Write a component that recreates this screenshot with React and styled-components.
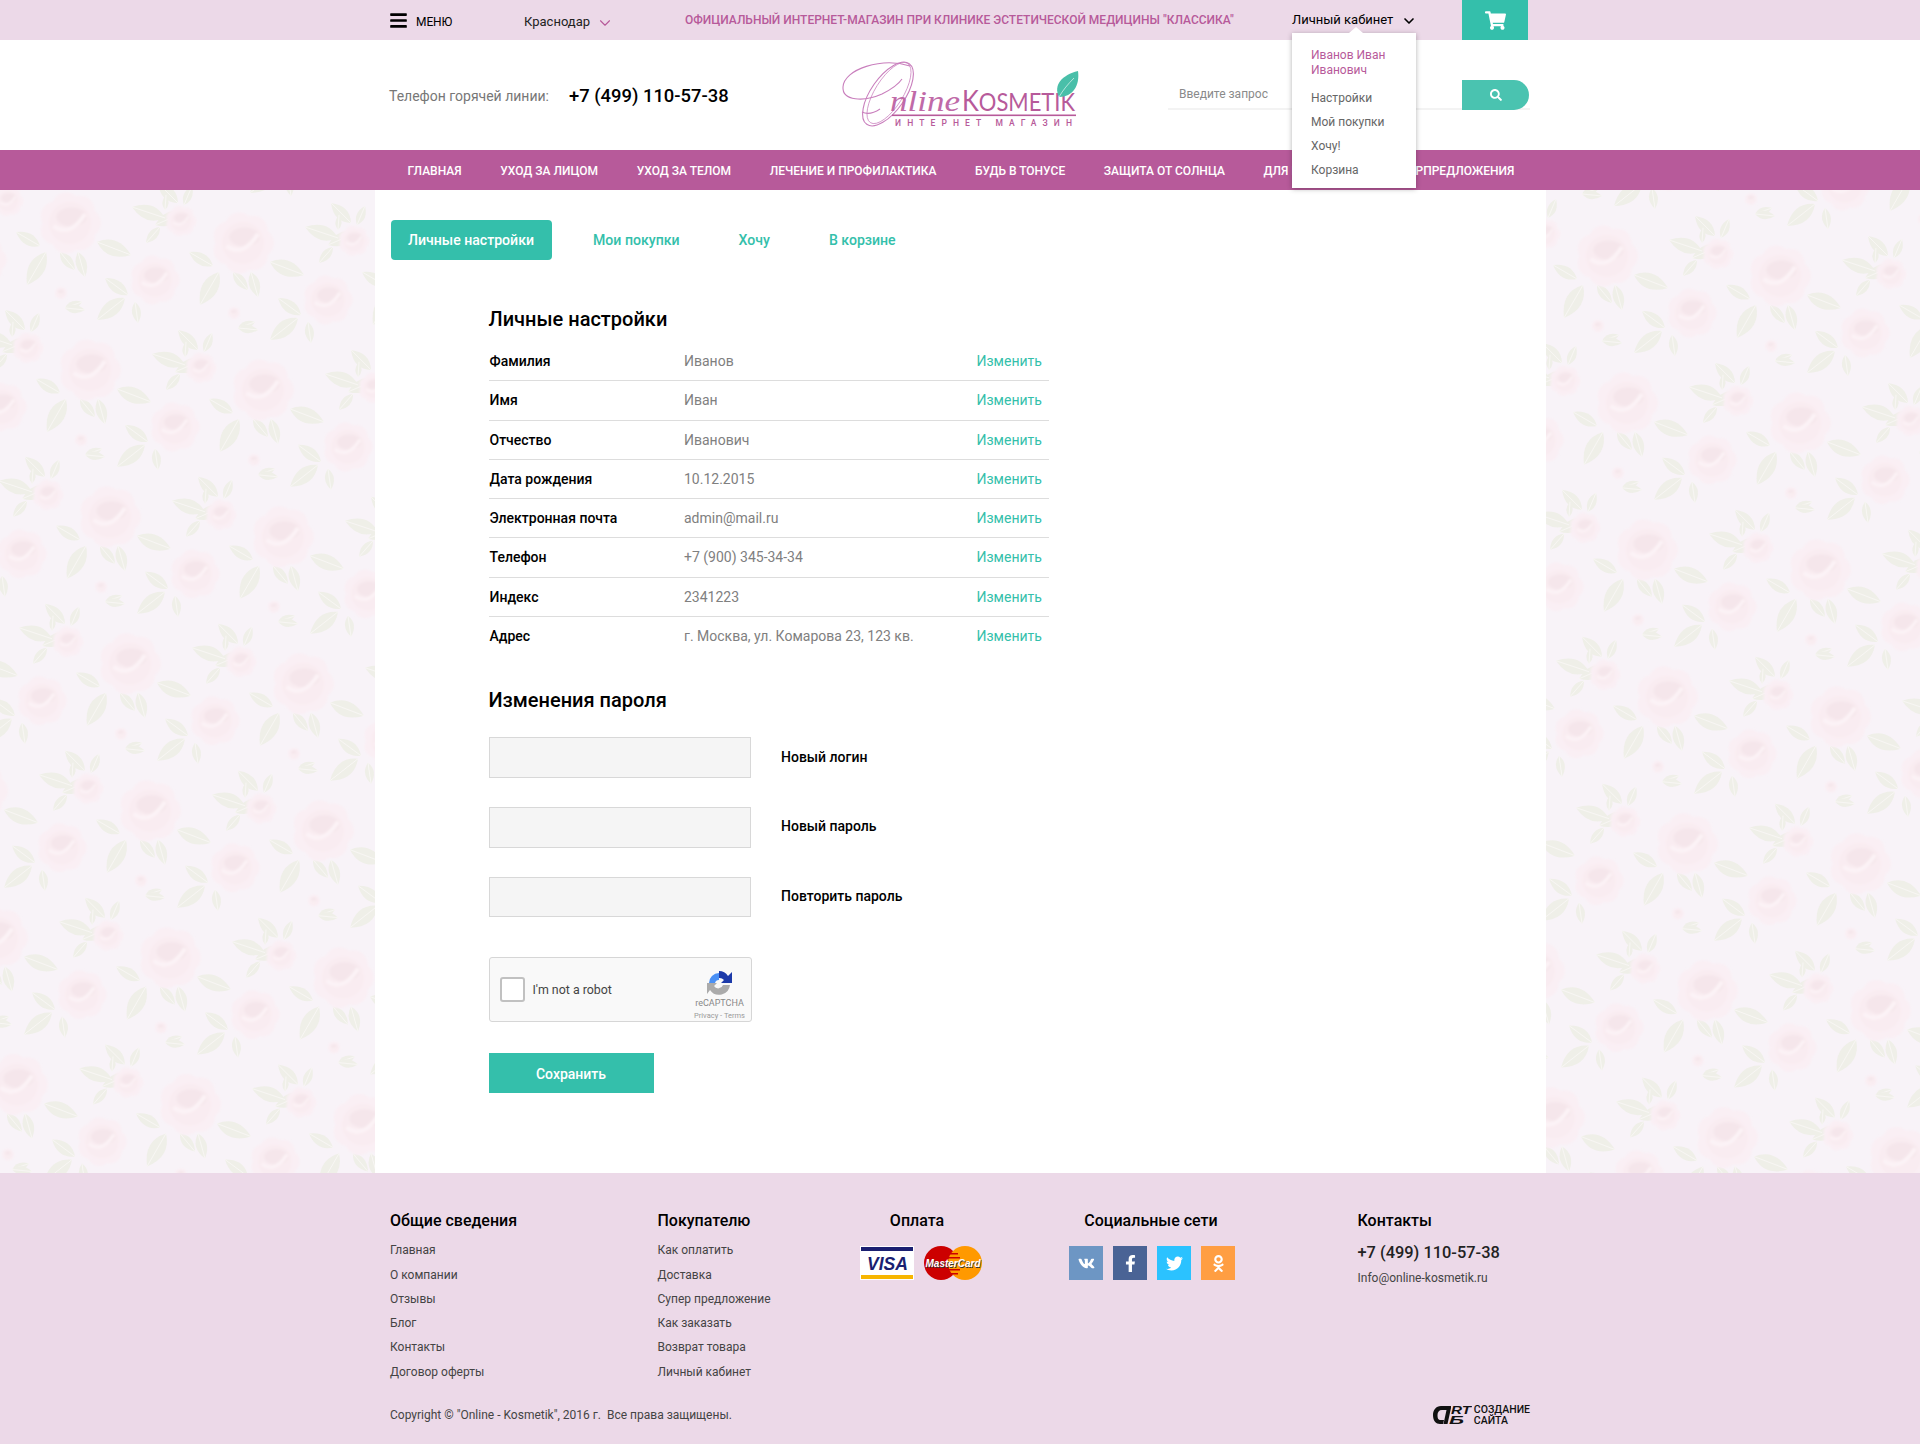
import React from 'react'
import styled, { createGlobalStyle } from 'styled-components'
import { FaBars, FaShoppingCart, FaSearch, FaVk, FaFacebookF, FaTwitter, FaOdnoklassniki } from 'react-icons/fa'
import { ChevronDown } from 'lucide-react'

const teal = '#34bfab'
const pink = '#b75a9a'

const leaf = (x1, y1, x2, y2) => {
  const dx = x2 - x1, dy = y2 - y1
  const nx = -dy * 0.42, ny = dx * 0.42
  const mx = x1 + dx * 0.45, my = y1 + dy * 0.45
  return `<path d="M${x1} ${y1}Q${mx + nx} ${my + ny} ${x2} ${y2}Q${mx - nx} ${my - ny} ${x1} ${y1}Z" fill="#efefe8"/><path d="M${x1} ${y1}L${x2} ${y2}" stroke="#f8f6f4" stroke-width="1"/>`
}

const rose = (x, y, r) => {
  let petals = ''
  for (let k = 0; k < 7; k++) {
    const a = (k / 7) * Math.PI * 2
    petals += `<circle cx="${x + Math.cos(a) * r * 0.55}" cy="${y + Math.sin(a) * r * 0.55}" r="${r * 0.48}" fill="#faeff4"/>`
  }
  return `<g filter="url(#b)">${petals}
    <circle cx="${x}" cy="${y}" r="${r * 0.7}" fill="#f9ecf1"/>
    <ellipse cx="${x + r * 0.05}" cy="${y - r * 0.2}" rx="${r * 0.5}" ry="${r * 0.32}" fill="#f5e6eb"/>
    <path d="M${x - r * 0.55} ${y + r * 0.1}Q${x} ${y + r * 0.5} ${x + r * 0.5} ${y - r * 0.3}" stroke="#fcf3f6" stroke-width="${r * 0.14}" fill="none"/>
  </g>`
}

const motif = [
  leaf(40, 66, 16, 52), leaf(97, 62, 131, 75), leaf(46, 72, 27, 105), leaf(78, 72, 85, 97), leaf(60, 72, 75, 90),
  rose(70, 43, 30),
  leaf(165, 38, 132, 27), leaf(165, 30, 166, 15), leaf(160, 47, 146, 63),
  rose(181, 41, 15),
  leaf(128, 115, 105, 98), leaf(125, 118, 97, 140), leaf(135, 122, 138, 143),
  rose(155, 100, 24),
  leaf(65, 128, 82, 122), leaf(65, 128, 85, 130),
  rose(61, 113, 6),
  leaf(25, 150, 5, 130), leaf(31, 152, 39, 133), leaf(30, 160, 2, 172),
].join('')

const buildFloral = () => {
  let uses = ''
  for (let j = -2; j < 9; j++) {
    for (let i = -2; i < 13; i++) {
      uses += `<use href="#m" x="${i * 173 + j * 20}" y="${i * 20 + j * 147 - 10}"/>`
    }
  }
  const svg = `<svg xmlns="http://www.w3.org/2000/svg" width="1920" height="990"><defs><filter id="b" x="-20%" y="-20%" width="140%" height="140%"><feGaussianBlur stdDeviation="1.2"/></filter><g id="m">${motif}</g></defs>${uses}</svg>`
  return `url("data:image/svg+xml,${encodeURIComponent(svg)}")`
}

const GlobalStyle = createGlobalStyle`
  html, body { margin: 0; padding: 0; }
  body { font-family: Roboto, "Liberation Sans", sans-serif; background: #fff; color: #000; }
  * { box-sizing: border-box; }
`

const Container = styled.div`
  width: 1140px;
  margin: 0 auto;
  display: flex;
`

const TopBar = styled.div`
  height: 40px;
  background: #ecd9e8;
  position: relative;
  z-index: 5;
`

const MenuBtn = styled.div`
  width: 134px;
  display: flex;
  align-items: center;
  font-size: 12px;
  svg { font-size: 19px; margin: 0 8px 0 -1px; }
  span { padding-top: 3px; letter-spacing: -0.1px; }
`

const City = styled.div`
  width: 161px;
  display: flex;
  align-items: center;
  font-size: 13px;
  color: #222;
  padding-top: 2px;
  svg { margin-left: 6px; color: ${pink}; margin-top: 2px; }
`

const Slogan = styled.div`
  width: 607px;
  font-size: 12px;
  font-weight: 500;
  color: ${pink};
  line-height: 41px;
  white-space: nowrap;
`

const Account = styled.div`
  width: 170px;
  position: relative;
  display: flex;
  align-items: center;
  height: 40px;
  font-size: 13px;
  padding-bottom: 1px;
  svg { margin-left: 8px; margin-top: 2px; }
`

const Dropdown = styled.div`
  position: absolute;
  left: 0;
  top: 33px;
  width: 124px;
  height: 155px;
  background: #fff;
  box-shadow: 0 1px 5px rgba(0, 0, 0, 0.3);
  padding: 15px 0 0 19px;
  font-size: 12px;
  color: #666;
  z-index: 10;
  &::before {
    content: '';
    position: absolute;
    left: 57px;
    top: -6px;
    border-left: 7px solid transparent;
    border-right: 7px solid transparent;
    border-bottom: 6px solid #fff;
  }
`

const DropName = styled.div`
  color: ${pink};
  line-height: 15px;
  margin-bottom: 8px;
  padding-right: 20px;
`

const DropItem = styled.div`
  line-height: 24px;
`

const Cart = styled.div`
  width: 66px;
  height: 40px;
  background: ${teal};
  display: flex;
  align-items: center;
  justify-content: center;
  color: #fff;
  font-size: 21px;
`

const Header = styled.div`
  height: 110px;
  background: #fff;
  ${Container} { height: 100%; align-items: center; }
`

const PhoneBlock = styled.div`
  width: 452px;
  display: flex;
  align-items: center;
  padding-top: 1px;
  margin-left: -1px;
  margin-right: 1px;
`

const PhoneLabel = styled.span`
  width: 180px;
  font-size: 14px;
  color: #777;
`

const PhoneNum = styled.span`
  font-size: 18.4px;
  font-weight: 500;
`

const LogoSlot = styled.div`
  width: 326px;
  height: 76px;
  svg { display: block; margin-left: -4px; }
`

const Search = styled.div`
  width: 362px;
  height: 30px;
  display: flex;
  border-bottom: 2px solid #f3f3f3;
`

const SearchText = styled.div`
  width: 294px;
  padding-left: 11px;
  font-size: 12px;
  line-height: 29px;
  color: #8a8a8a;
`

const SearchBtn = styled.div`
  width: 67px;
  height: 30px;
  background: #4ac3b0;
  border-radius: 0 15px 15px 0;
  color: #fff;
  font-size: 12px;
  display: flex;
  align-items: center;
  justify-content: center;
`

const Nav = styled.div`
  height: 40px;
  background: ${pink};
`

const NavList = styled.div`
  display: flex;
  gap: 38.6px;
  padding-left: 17.5px;
  font-size: 12px;
  font-weight: 500;
  line-height: 42px;
  color: #fff;
  white-space: nowrap;
`

const Main = styled.div`
  background-color: #f8f3f8;
  background-image: ${buildFloral()};
  background-repeat: no-repeat;
`

const Column = styled.div`
  width: 1171px;
  margin: 0 auto;
  background: #fff;
  padding: 30px 0 80px 16px;
`

const Tabs = styled.div`
  display: flex;
  gap: 24px;
`

const Tab = styled.div`
  height: 40px;
  padding: 0 17.5px;
  border-radius: 4px;
  font-size: 14.1px;
  font-weight: 500;
  line-height: 40px;
  background: ${p => (p.$active ? teal : 'transparent')};
  color: ${p => (p.$active ? '#fff' : teal)};
`

const Section = styled.div`
  margin-left: 98px;
`

const Title = styled.h2`
  margin: ${p => p.$top}px 0 ${p => p.$bottom}px 0;
  font-size: 20px;
  font-weight: 500;
  line-height: 24px;
  color: #000;
`

const Table = styled.div`
  width: 560px;
`

const Row = styled.div`
  height: 39.25px;
  display: flex;
  align-items: center;
  font-size: 14px;
  border-bottom: 1px solid #ddd;
  &:last-child { border-bottom: none; }
`

const RowLabel = styled.span`
  width: 195.5px;
  font-weight: 500;
  padding-left: 1px;
`

const RowValue = styled.span`
  width: 292.5px;
  color: #808080;
`

const RowLink = styled.span`
  color: ${teal};
`

const FormRow = styled.div`
  display: flex;
  align-items: center;
  margin-bottom: ${p => (p.$last ? 0 : 29.3)}px;
`

const Input = styled.div`
  width: 262px;
  height: 40.5px;
  background: #f5f5f5;
  border: 1px solid #d8d8d8;
  margin-right: 30.5px;
`

const FormLabel = styled.span`
  font-size: 14px;
  font-weight: 500;
  padding-bottom: 2px;
`

const Captcha = styled.div`
  width: 263px;
  height: 65px;
  margin-top: 40px;
  background: #f9f9f9;
  border: 1px solid #d6d6d6;
  border-radius: 3px;
  display: flex;
  align-items: center;
  padding-left: 10px;
`

const CaptchaBox = styled.div`
  width: 25px;
  height: 25px;
  background: #fff;
  border: 2px solid #c1c1c1;
  border-radius: 3px;
  margin-right: 8px;
`

const CaptchaText = styled.span`
  font-size: 12.4px;
  color: #444;
`

const CaptchaBrand = styled.div`
  margin-left: auto;
  width: 60px;
  margin-right: 1px;
  padding-top: 12px;
  display: flex;
  flex-direction: column;
  align-items: center;
  svg { display: block; margin-bottom: 1px; }
`

const BrandName = styled.span`
  font-size: 9px;
  line-height: 13px;
  color: #888;
`

const BrandLinks = styled.span`
  font-size: 7.5px;
  line-height: 12px;
  color: #999;
  white-space: nowrap;
`

const SaveBtn = styled.div`
  width: 165px;
  height: 40px;
  margin-top: 31px;
  background: ${teal};
  color: #fff;
  font-size: 14px;
  font-weight: 500;
  line-height: 42px;
  text-align: center;
`

const Footer = styled.div`
  height: 271px;
  background: #ecd9e8;
  padding-top: 39px;
  ${Container} { flex-wrap: wrap; }
`

const FootCol = styled.div`
  width: ${p => p.$w}px;
  margin-left: ${p => p.$ml || 0}px;
  height: 193px;
`

const FootHead = styled.div`
  font-size: 16px;
  font-weight: 500;
  line-height: 18px;
  margin-bottom: ${p => p.$mb || 8}px;
  margin-left: ${p => p.$shift || 0}px;
  text-align: ${p => (p.$center ? 'center' : 'left')};
`

const FootLink = styled.div`
  font-size: 12px;
  line-height: 24.2px;
  color: #444;
`

const Cards = styled.div`
  display: flex;
  align-items: center;
  gap: 10px;
  margin-left: 3px;
`

const Socials = styled.div`
  display: flex;
  gap: 10px;
`

const Social = styled.div`
  width: 34px;
  height: 34px;
  background: ${p => p.$bg};
  color: #fff;
  font-size: ${p => p.$size || 17}px;
  display: flex;
  align-items: center;
  justify-content: center;
`

const FootPhone = styled.div`
  font-size: 16.4px;
  font-weight: 500;
  line-height: 22px;
  color: #222;
  margin-top: -2px;
`

const FootMail = styled.div`
  font-size: 12px;
  line-height: 18px;
  color: #444;
  margin-top: 5px;
`

const Bottom = styled.div`
  width: 100%;
  height: 20px;
  display: flex;
  align-items: center;
  justify-content: space-between;
  font-size: 12px;
  color: #444;
`

const ArtLogo = styled.div`
  display: flex;
  align-items: center;
  gap: 2px;
  svg { display: block; }
`

const ArtText = styled.div`
  font-size: 10.5px;
  font-weight: 500;
  line-height: 11px;
  color: #111;
`

const Logo = () => (
  <svg width="244" height="76" viewBox="0 0 244 76">
    <g fill="none" stroke="#c97fbd" strokeWidth="1.1">
      <ellipse cx="50" cy="37" rx="37" ry="17" transform="rotate(-55 50 37)" />
      <ellipse cx="51" cy="36" rx="35" ry="14" transform="rotate(-58 51 36)" strokeWidth="0.7" />
      <path d="M72 9 C44 0 6 12 5 30 C4 44 26 45 44 37 C54 32 60 28 64 22" />
      <path d="M24 55 C30 58 36 56 42 52" />
    </g>
    <text x="52" y="54" fontFamily='"Liberation Serif", serif' fontStyle="italic" fontSize="30" fill="#c06aa8" textLength="70" lengthAdjust="spacingAndGlyphs">nline</text>
    <text x="124" y="54" fontFamily='Lato, "Open Sans", sans-serif' fill="#b75a9a" textLength="113" lengthAdjust="spacingAndGlyphs">
      <tspan fontSize="29">K</tspan><tspan fontSize="25">OSMETIK</tspan>
    </text>
    <rect x="54" y="57.5" width="184" height="1.6" fill="#b75a9a" />
    <text x="57" y="69" fontFamily='Roboto, sans-serif' fontSize="8.5" fontWeight="500" fill="#b75a9a" textLength="177" lengthAdjust="spacing">ИНТЕРНЕТ МАГАЗИН</text>
    <path d="M221 40 C215 28 224 18 240 14 C242 28 235 40 221 40 Z" fill="#49bfa9" />
    <path d="M221 40 C225 33 230 27 236 21" stroke="#fff" strokeWidth="0.6" fill="none" />
  </svg>
)

const RecaptchaIcon = () => (
  <svg width="27" height="26" viewBox="0 0 27 26">
    <path d="M3 13 A10 10 0 0 1 13 3 L13 10 A4 4 0 0 0 9 13 Z" fill="#4a90f5" />
    <path d="M13 1 A11 11 0 0 1 22 6 L26 2 L26 13 L15 13 L18 10 A6 6 0 0 0 13 8 Z" fill="#1c3aa9" />
    <path d="M1 13 L1 24 L4 20 A11 11 0 0 0 24 15 L17 15 A5 5 0 0 1 8 16 L11 13 Z" fill="#ababab" />
  </svg>
)

const Visa = () => (
  <svg width="54" height="34" viewBox="0 0 54 34">
    <rect width="54" height="34" fill="#fff" />
    <rect x="1" y="1" width="52" height="4" fill="#1a1f71" />
    <rect x="1" y="29" width="52" height="4" fill="#f7b600" />
    <text x="7" y="24" fontFamily='"Liberation Sans", sans-serif' fontWeight="700" fontStyle="italic" fontSize="18" fill="#1a1f71" textLength="41" lengthAdjust="spacingAndGlyphs">VISA</text>
  </svg>
)

const MasterCard = () => (
  <svg width="58" height="34" viewBox="0 0 58 34">
    <circle cx="17" cy="17" r="17" fill="#cc0000" />
    <circle cx="41" cy="17" r="17" fill="#ff9900" />
    <g fill="#cc0000">
      <rect x="24" y="7" width="10" height="1.5" />
      <rect x="22" y="11" width="14" height="1.5" />
      <rect x="22" y="23" width="14" height="1.5" />
      <rect x="24" y="27" width="10" height="1.5" />
    </g>
    <text x="29.6" y="21.6" textAnchor="middle" fontFamily='"Liberation Sans", sans-serif' fontWeight="700" fontStyle="italic" fontSize="10" fill="#333">MasterCard</text>
    <text x="29" y="21" textAnchor="middle" fontFamily='"Liberation Sans", sans-serif' fontWeight="700" fontStyle="italic" fontSize="10" fill="#fff">MasterCard</text>
  </svg>
)

const ArtMark = () => (
  <svg width="39" height="20" viewBox="0 0 39 20">
    <path d="M18 1 L8 1 C3 1 0 5 0 10 C0 16 3 19 7 19 L10 19 L11 15 L8 15 C5 15 4.5 13 4.5 10 C4.5 7 6 5 9 5 L13.5 5 L10.5 19 L14.5 19 L18 3 Z" fill="#111" />
    <text x="18" y="9" fontFamily='"Liberation Sans", sans-serif' fontWeight="700" fontStyle="italic" fontSize="10.5" fill="#111" textLength="20" lengthAdjust="spacingAndGlyphs">RT</text>
    <text x="16" y="19" fontFamily='"Liberation Sans", sans-serif' fontWeight="700" fontStyle="italic" fontSize="11" fill="#111" textLength="15" lengthAdjust="spacingAndGlyphs">Б</text>
  </svg>
)

const navItems = ['Главная', 'Уход за лицом', 'Уход за телом', 'Лечение и профилактика', 'Будь в тонусе', 'Защита от солнца', 'Для мужчин', 'Суперпредложения']

const rows = [
  ['Фамилия', 'Иванов'],
  ['Имя', 'Иван'],
  ['Отчество', 'Иванович'],
  ['Дата рождения', '10.12.2015'],
  ['Электронная почта', 'admin@mail.ru'],
  ['Телефон', '+7 (900) 345-34-34'],
  ['Индекс', '2341223'],
  ['Адрес', 'г. Москва, ул. Комарова 23, 123 кв.'],
]

const commonLinks = ['Главная', 'О компании', 'Отзывы', 'Блог', 'Контакты', 'Договор оферты']
const buyerLinks = ['Как оплатить', 'Доставка', 'Супер предложение', 'Как заказать', 'Возврат товара', 'Личный кабинет']

export default function App() {
  return (
    <>
      <GlobalStyle />
      <TopBar>
        <Container>
          <MenuBtn><FaBars /><span>МЕНЮ</span></MenuBtn>
          <City>Краснодар<ChevronDown size={18} strokeWidth={1.5} /></City>
          <Slogan>ОФИЦИАЛЬНЫЙ ИНТЕРНЕТ-МАГАЗИН ПРИ КЛИНИКЕ ЭСТЕТИЧЕСКОЙ МЕДИЦИНЫ "КЛАССИКА"</Slogan>
          <Account>
            Личный кабинет<ChevronDown size={16} strokeWidth={2.5} />
            <Dropdown>
              <DropName>Иванов Иван Иванович</DropName>
              <DropItem>Настройки</DropItem>
              <DropItem>Мой покупки</DropItem>
              <DropItem>Хочу!</DropItem>
              <DropItem>Корзина</DropItem>
            </Dropdown>
          </Account>
          <Cart><FaShoppingCart /></Cart>
        </Container>
      </TopBar>
      <Header>
        <Container>
          <PhoneBlock>
            <PhoneLabel>Телефон горячей линии:</PhoneLabel>
            <PhoneNum>+7 (499) 110-57-38</PhoneNum>
          </PhoneBlock>
          <LogoSlot><Logo /></LogoSlot>
          <Search>
            <SearchText>Введите запрос</SearchText>
            <SearchBtn><FaSearch /></SearchBtn>
          </Search>
        </Container>
      </Header>
      <Nav>
        <Container>
          <NavList>
            {navItems.map(item => <span key={item}>{item.toUpperCase()}</span>)}
          </NavList>
        </Container>
      </Nav>
      <Main>
        <Column>
          <Tabs>
            <Tab $active>Личные настройки</Tab>
            <Tab>Мои покупки</Tab>
            <Tab>Хочу</Tab>
            <Tab>В корзине</Tab>
          </Tabs>
          <Section>
            <Title $top={47} $bottom={11}>Личные настройки</Title>
            <Table>
              {rows.map(([label, value]) => (
                <Row key={label}>
                  <RowLabel>{label}</RowLabel>
                  <RowValue>{value}</RowValue>
                  <RowLink>Изменить</RowLink>
                </Row>
              ))}
            </Table>
            <Title $top={32.4} $bottom={25}>Изменения пароля</Title>
            <FormRow><Input /><FormLabel>Новый логин</FormLabel></FormRow>
            <FormRow><Input /><FormLabel>Новый пароль</FormLabel></FormRow>
            <FormRow $last><Input /><FormLabel>Повторить пароль</FormLabel></FormRow>
            <Captcha>
              <CaptchaBox />
              <CaptchaText>I'm not a robot</CaptchaText>
              <CaptchaBrand>
                <RecaptchaIcon />
                <BrandName>reCAPTCHA</BrandName>
                <BrandLinks>Privacy - Terms</BrandLinks>
              </CaptchaBrand>
            </Captcha>
            <SaveBtn>Сохранить</SaveBtn>
          </Section>
        </Column>
      </Main>
      <Footer>
        <Container>
          <FootCol $w={267.5}>
            <FootHead>Общие сведения</FootHead>
            {commonLinks.map(l => <FootLink key={l}>{l}</FootLink>)}
          </FootCol>
          <FootCol $w={199.5}>
            <FootHead>Покупателю</FootHead>
            {buyerLinks.map(l => <FootLink key={l}>{l}</FootLink>)}
          </FootCol>
          <FootCol $w={125}>
            <FootHead $center $mb={16} $shift={-5}>Оплата</FootHead>
            <Cards><Visa /><MasterCard /></Cards>
          </FootCol>
          <FootCol $w={166} $ml={87}>
            <FootHead $center $mb={16} $shift={-2}>Социальные сети</FootHead>
            <Socials>
              <Social $bg="#6d96c4"><FaVk /></Social>
              <Social $bg="#4a6395"><FaFacebookF /></Social>
              <Social $bg="#2bc2ff"><FaTwitter /></Social>
              <Social $bg="#ff9e42"><FaOdnoklassniki /></Social>
            </Socials>
          </FootCol>
          <FootCol $w={172} $ml={122.5}>
            <FootHead $mb={14}>Контакты</FootHead>
            <FootPhone>+7 (499) 110-57-38</FootPhone>
            <FootMail>Info@online-kosmetik.ru</FootMail>
          </FootCol>
          <Bottom>
            <span>Copyright © "Online - Kosmetik", 2016 г.&nbsp; Все права защищены.</span>
            <ArtLogo>
              <ArtMark />
              <ArtText>СОЗДАНИЕ<br />САЙТА</ArtText>
            </ArtLogo>
          </Bottom>
        </Container>
      </Footer>
    </>
  )
}
